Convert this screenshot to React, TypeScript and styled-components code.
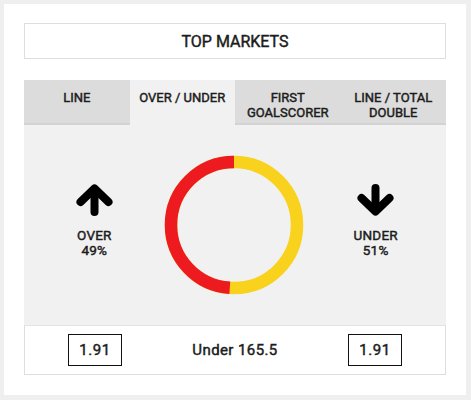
import React, { FC } from 'react'
import styled, { createGlobalStyle } from 'styled-components'

const GlobalStyle = createGlobalStyle`
  html, body {
    margin: 0;
    padding: 0;
    background: #efefef;
  }
  body {
    font-family: Roboto, 'Liberation Sans', Arial, sans-serif;
    color: #1c1c1c;
    -webkit-text-stroke: 0.45px #1c1c1c;
  }
`

const tabs = ['LINE', 'OVER / UNDER', 'FIRST GOALSCORER', 'LINE / TOTAL DOUBLE']

const market = {
  overPct: 49,
  underPct: 51,
  line: 'Under 165.5',
  overOdds: '1.91',
  underOdds: '1.91',
}

const ArrowIcon: FC<{ down?: boolean }> = ({ down }) => (
  <svg width='37' height='32' viewBox='0 0 37 32' style={down ? { transform: 'rotate(180deg)' } : undefined}>
    <g fill='none' stroke='#000' strokeWidth='8' strokeLinecap='round' strokeLinejoin='round'>
      <polyline points='4.5,18 18.5,4.5 32.5,18' />
      <line x1='18.5' y1='7' x2='18.5' y2='28' />
    </g>
  </svg>
)

const Donut: FC<{ red: number }> = ({ red }) => {
  const r = 63
  const c = 2 * Math.PI * r
  const redLen = (c * red) / 100
  return (
    <svg width='140' height='140' viewBox='0 0 140 140'>
      <circle cx='70' cy='70' r={r} fill='none' stroke='#f8d21c' strokeWidth='12.5' />
      <circle
        cx='70'
        cy='70'
        r={r}
        fill='none'
        stroke='#ed1a1f'
        strokeWidth='12.5'
        strokeDasharray={`${redLen} ${c - redLen}`}
        strokeDashoffset={redLen}
        transform='rotate(-90 70 70)'
      />
    </svg>
  )
}

const App: FC = () => {
  return (
    <>
      <GlobalStyle />
      <Card>
        <Title>TOP MARKETS</Title>
        <Tabs>
          {tabs.map((t) => (
            <Tab key={t} $active={t === 'OVER / UNDER'}>
              {t}
            </Tab>
          ))}
        </Tabs>
        <Panel>
          <Side>
            <ArrowIcon />
            <SideLabel>
              <div>OVER</div>
              <div>{market.overPct}%</div>
            </SideLabel>
          </Side>
          <Center>
            <Donut red={market.overPct} />
          </Center>
          <Side>
            <ArrowIcon down />
            <SideLabel>
              <div>UNDER</div>
              <div>{market.underPct}%</div>
            </SideLabel>
          </Side>
        </Panel>
        <Footer>
          <Cell>
            <Odds>{market.overOdds}</Odds>
          </Cell>
          <Cell>
            <LineText>{market.line}</LineText>
          </Cell>
          <Cell>
            <Odds>{market.underOdds}</Odds>
          </Cell>
        </Footer>
      </Card>
    </>
  )
}

const Card = styled.div`
  margin: 4px 4px 0;
  width: 422px;
  height: 372px;
  padding: 19px 20px 0;
  background: #fff;
  display: flex;
  flex-direction: column;
`

const Title = styled.div`
  height: 34px;
  border: 1px solid #dedede;
  display: flex;
  align-items: center;
  justify-content: center;
  font-size: 16px;
  margin-bottom: 21px;
`

const Tabs = styled.div`
  display: grid;
  grid-template-columns: repeat(4, 1fr);
  height: 45px;
`

const Tab = styled.div<{ $active?: boolean }>`
  background: ${(p) => (p.$active ? '#f1f1f1' : '#dcdcdc')};
  box-shadow: ${(p) => (p.$active ? 'none' : 'inset 0 -2px 0 #d3d3d3')};
  padding: 10px 6px 0;
  text-align: center;
  font-size: 13px;
  line-height: 15px;
`

const Panel = styled.div`
  background: #f1f1f1;
  height: 200px;
  display: grid;
  grid-template-columns: repeat(3, 1fr);
  align-items: center;
`

const Side = styled.div`
  display: flex;
  flex-direction: column;
  align-items: center;
  gap: 12px;
  margin-top: -8px;
`

const SideLabel = styled.div`
  font-size: 13.5px;
  line-height: 15px;
  text-align: center;
  letter-spacing: 0.2px;
`

const Center = styled.div`
  display: flex;
  justify-content: center;
  margin-left: -2px;
`

const Footer = styled.div`
  height: 48px;
  border: 1px solid #dedede;
  border-top-color: #e4e4e4;
  display: grid;
  grid-template-columns: repeat(3, 1fr);
  align-items: center;
`

const Cell = styled.div`
  display: flex;
  justify-content: center;
`

const Odds = styled.div`
  width: 52px;
  height: 30px;
  border: 1px solid #111;
  display: flex;
  align-items: center;
  justify-content: center;
  font-size: 15px;
  letter-spacing: 0.6px;
`

const LineText = styled.div`
  font-size: 15px;
  letter-spacing: 0.4px;
`

export default App
